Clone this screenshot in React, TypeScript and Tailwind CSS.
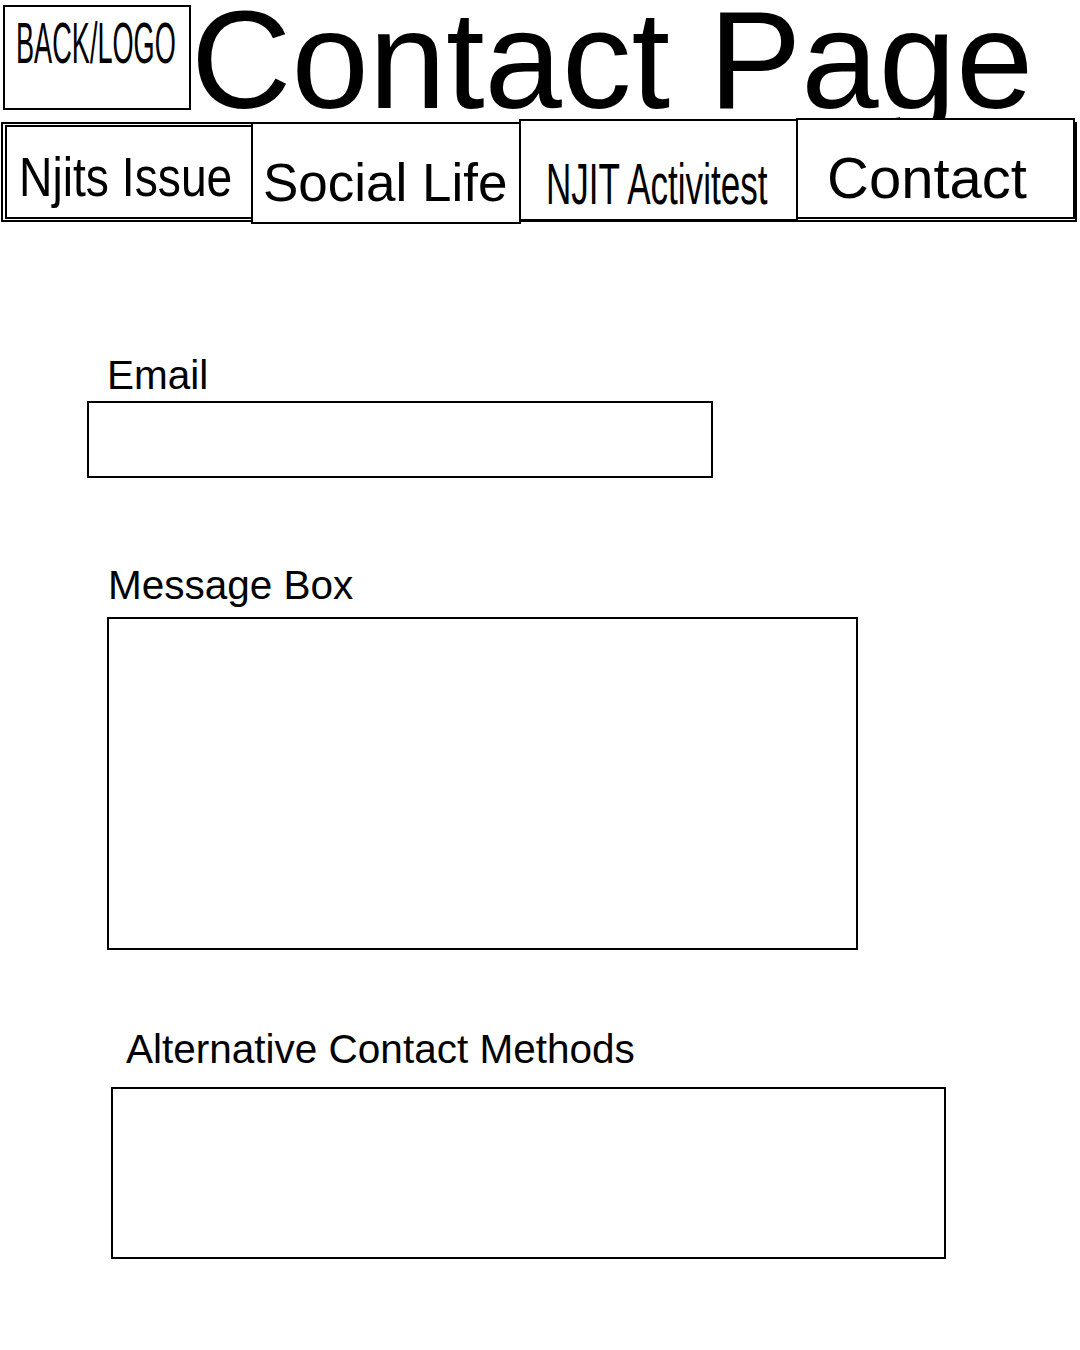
const font = "font-['Liberation_Sans',Arial,sans-serif]";

type Tab = {
  label: string;
  box: string;
  text: string;
};

const tabs: Tab[] = [
  {
    label: "Njits Issue",
    box: "ml-[2px] mt-[1px] h-[94px] w-[248px] pl-[12px] pt-[22px]",
    text: "text-[56px] scale-x-[0.826]",
  },
  {
    label: "Social Life",
    box: "-ml-[2px] -mt-[2px] h-[102px] w-[270px] pl-[10px] pt-[32px]",
    text: "text-[53px]",
  },
  {
    label: "NJIT Activitest",
    box: "-ml-[2px] -mt-[5px] h-[102px] w-[279px] pl-[25px] pt-[35px]",
    text: "text-[57px] scale-x-[0.615]",
  },
  {
    label: "Contact",
    box: "-ml-[2px] -mt-[6px] h-[101px] w-[279px] pl-[29px] pt-[29px]",
    text: "text-[58px]",
  },
];

function NavTab({ tab }: { tab: Tab }) {
  return (
    <div className={`relative flex shrink-0 border-2 border-black bg-white ${tab.box}`}>
      <span className={`block shrink-0 origin-left whitespace-nowrap leading-none ${tab.text}`}>
        {tab.label}
      </span>
    </div>
  );
}

function Field({
  label,
  labelClass,
  boxClass,
}: {
  label: string;
  labelClass: string;
  boxClass: string;
}) {
  return (
    <>
      <label className={`block whitespace-nowrap text-[40.5px] leading-[40px] ${labelClass}`}>{label}</label>
      <div className={`border-2 border-black bg-white ${boxClass}`} />
    </>
  );
}

export default function App() {
  return (
    <div className={`min-h-[1350px] w-[1080px] bg-white text-black ${font}`}>
      <header className="flex h-[120px] items-start">
        <div className="ml-[3px] mt-[5px] flex h-[105px] w-[188px] shrink-0 items-start overflow-visible border-2 border-black pl-[11px] pt-[8px]">
          <span className="block shrink-0 origin-left scale-x-[0.476] whitespace-nowrap text-[57px] leading-none">
            BACK/LOGO
          </span>
        </div>
        <h1 className="whitespace-nowrap text-[139px] font-normal leading-[120px]">Contact Page</h1>
      </header>

      <nav className="relative ml-[1px] mt-[2px] flex h-[100px] w-[1076px] items-start border-2 border-black">
        {tabs.map((tab) => (
          <NavTab key={tab.label} tab={tab} />
        ))}
      </nav>

      <form className="flex flex-col items-start">
        <Field
          label="Email"
          labelClass="ml-[107px] mt-[133px]"
          boxClass="ml-[87px] mt-[6px] h-[77px] w-[626px]"
        />
        <Field
          label="Message Box"
          labelClass="ml-[108px] mt-[87px]"
          boxClass="ml-[107px] mt-[12px] h-[333px] w-[751px]"
        />
        <Field
          label="Alternative Contact Methods"
          labelClass="ml-[126px] mt-[79px]"
          boxClass="ml-[111px] mt-[18px] h-[172px] w-[835px]"
        />
      </form>
    </div>
  );
}
